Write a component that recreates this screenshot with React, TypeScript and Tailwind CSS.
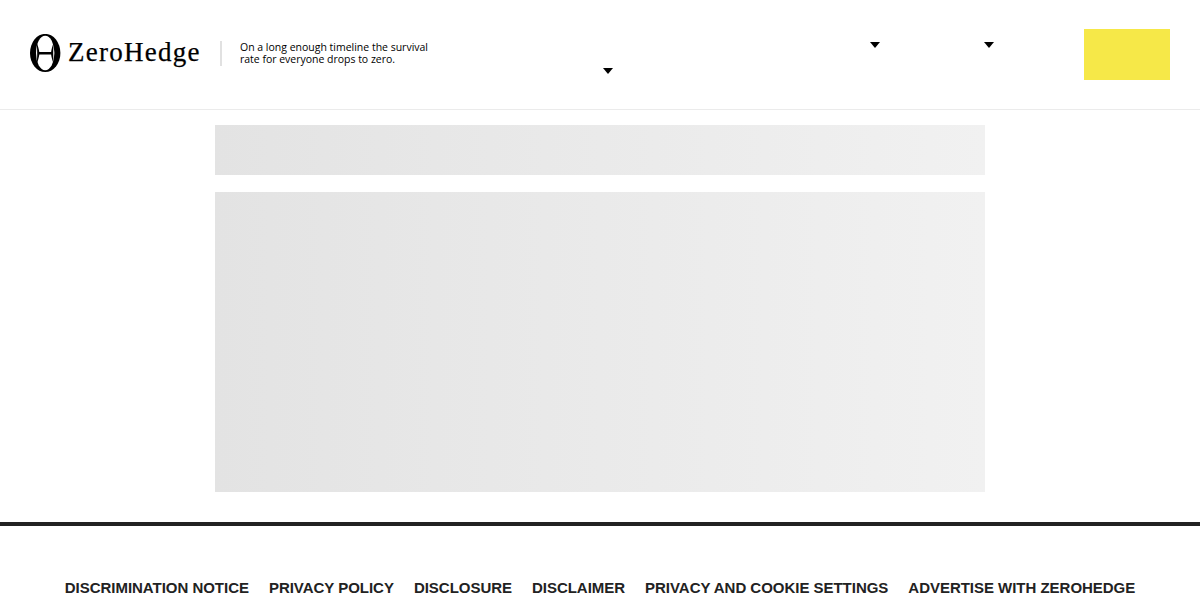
const footerLinks = [
  "Discrimination Notice",
  "Privacy Policy",
  "Disclosure",
  "Disclaimer",
  "Privacy and Cookie Settings",
  "Advertise with ZeroHedge",
];

function LogoMark() {
  return (
    <svg width="31" height="39" viewBox="0 0 31 39" aria-hidden="true">
      <ellipse cx="15.2" cy="19" rx="15.2" ry="19.1" fill="#000" />
      <ellipse cx="15.2" cy="19" rx="9.2" ry="17.2" fill="#fff" />
      {/* crossbar with tapered pillars */}
      <path
        d="M6.4 7.5C8 12 9 15.5 9.3 17.9H21.1C21.4 15.5 22.4 12 24 7.5C23.4 12 23.2 15.5 23.2 19.2S23.4 26.5 24 31C22.4 26.5 21.4 23 21.1 20.6H9.3C9 23 8 26.5 6.4 31C7 26.5 7.2 23 7.2 19.2S7 12 6.4 7.5Z"
        fill="#000"
      />
    </svg>
  );
}

function Caret() {
  return (
    <svg width="10" height="6" viewBox="0 0 10 6" className="block" aria-hidden="true">
      <path d="M0 0H10L5 6Z" fill="#000" />
    </svg>
  );
}

function Header() {
  return (
    <header className="flex h-[110px] items-start border-b border-[#ebebeb] px-[30px]">
      <a href="#" className="flex pt-[34px]">
        <LogoMark />
        <svg width="380" height="39" viewBox="0 0 380 39" className="overflow-visible">
          <text
            x="7"
            y="27"
            textLength="131.5"
            fontSize="27"
            stroke="#000"
            strokeWidth="0.25"
            className="font-['Liberation_Serif',serif]"
          >
            ZeroHedge
          </text>
          <path d="M160 7V32" stroke="#d4d4d4" strokeWidth="1.4" />
          <g fontSize="10.5" className="font-['Open_Sans',sans-serif] font-medium">
            <text x="179" y="17" textLength="188">
              On a long enough timeline the survival
            </text>
            <text x="179" y="29" textLength="155">
              rate for everyone drops to zero.
            </text>
          </g>
        </svg>
      </a>

      {/* Menu wraps on two rows */}
      <nav className="mr-[30px] ml-auto flex w-[451px] flex-col gap-5 pt-[42px] pr-[60px]">
        <div className="flex justify-end gap-[104px]">
          <Caret />
          <Caret />
        </div>
        <div className="flex">
          <Caret />
        </div>
      </nav>

      <button type="button" aria-label="Account" className="mt-[29px] h-[51px] w-[86px] bg-[#f6e848]" />
    </header>
  );
}

export default function App() {
  return (
    <div className="h-[600px] overflow-hidden bg-white font-['Liberation_Sans',sans-serif]">
      <Header />

      {/* Loading placeholders */}
      <main className="mx-auto flex w-[770px] flex-col gap-[17px] pt-[15px] pb-[30px]">
        <div className="h-[50px] bg-linear-to-r/srgb from-[#e3e3e3] to-[#f1f1f1]" />
        <div className="h-[300px] bg-linear-to-r/srgb from-[#e3e3e3] to-[#f1f1f1]" />
      </main>

      <footer className="border-t-4 border-[#222] pt-[50px]">
        <ul className="flex justify-center gap-5">
          {footerLinks.map((link) => (
            <li key={link}>
              <a
                href="#"
                className="text-[15px] leading-6 font-bold tracking-[-0.025px] whitespace-nowrap uppercase text-[#222]"
              >
                {link}
              </a>
            </li>
          ))}
        </ul>
      </footer>
    </div>
  );
}
